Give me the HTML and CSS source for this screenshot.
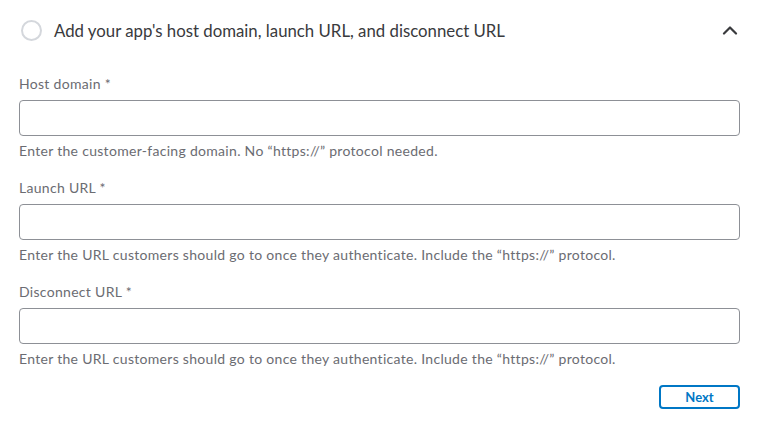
FILE: index.html
```html
<!DOCTYPE html>
<html lang="en">
<head>
    <meta charset="UTF-8">
    <meta name="viewport" content="width=device-width, initial-scale=1.0">
    <title>App URLs</title>
    <link rel="stylesheet" href="styles.css">
</head>
<body>
    <div class="step">
        <div class="step-header">
            <span class="step-circle"></span>
            <h2 class="step-title">Add your app's host domain, launch URL, and disconnect URL</h2>
            <svg class="chevron" width="16" height="10" viewBox="0 0 16 10">
                <path d="M2 8.5 L8 2.5 L14 8.5" fill="none" stroke="#393a3d" stroke-width="2.2" stroke-linecap="round" stroke-linejoin="round"/>
            </svg>
        </div>
        <form class="step-body">
            <div class="field">
                <label for="hostDomain">Host domain *</label>
                <input type="text" id="hostDomain" name="hostDomain">
                <div class="helper">Enter the customer-facing domain. No “https://” protocol needed.</div>
            </div>
            <div class="field">
                <label for="launchUrl">Launch URL *</label>
                <input type="text" id="launchUrl" name="launchUrl">
                <div class="helper">Enter the URL customers should go to once they authenticate. Include the “https://” protocol.</div>
            </div>
            <div class="field">
                <label for="disconnectUrl">Disconnect URL *</label>
                <input type="text" id="disconnectUrl" name="disconnectUrl">
                <div class="helper">Enter the URL customers should go to once they authenticate. Include the “https://” protocol.</div>
            </div>
            <div class="actions">
                <button type="button">Next</button>
            </div>
        </form>
    </div>
</body>
</html>
```

FILE: styles.css
```css
body {
    font-family: Lato, "Noto Sans", Arial, sans-serif;
    margin: 0;
    background: #fff;
    color: #393a3d;
}
.step-header {
    display: flex;
    align-items: center;
    height: 60px;
    padding: 0 33px 0 21px;
}
.step-circle {
    width: 17px;
    height: 17px;
    border: 2px solid #d4d7dc;
    border-radius: 50%;
    flex-shrink: 0;
}
.step-title {
    flex: 1;
    margin: 0 0 0 12px;
    font-size: 16.8px;
    font-weight: 400;
    color: #393a3d;
}
.chevron {
    flex-shrink: 0;
}
.step-body {
    display: flex;
    flex-direction: column;
    gap: 17px;
    padding: 14px 31px 0 19px;
}
.field {
    display: flex;
    flex-direction: column;
}
label {
    font-size: 14px;
    line-height: 20px;
    letter-spacing: 0.3px;
    color: #6b6c72;
    margin-bottom: 6px;
}
input[type="text"] {
    height: 36px;
    box-sizing: border-box;
    border: 1px solid #8d9096;
    border-radius: 4px;
    padding: 0 10px;
    font-size: 14px;
    font-family: inherit;
    outline: none;
}
.helper {
    font-size: 14px;
    line-height: 20px;
    letter-spacing: 0.3px;
    color: #6b6c72;
    margin-top: 5px;
}
.actions {
    display: flex;
    justify-content: flex-end;
    margin-top: -1px;
}
button {
    width: 81px;
    height: 24px;
    border: 2px solid #0077c5;
    border-radius: 4px;
    background: #fff;
    color: #0077c5;
    font-family: inherit;
    font-size: 13px;
    font-weight: 700;
    cursor: pointer;
}
```
